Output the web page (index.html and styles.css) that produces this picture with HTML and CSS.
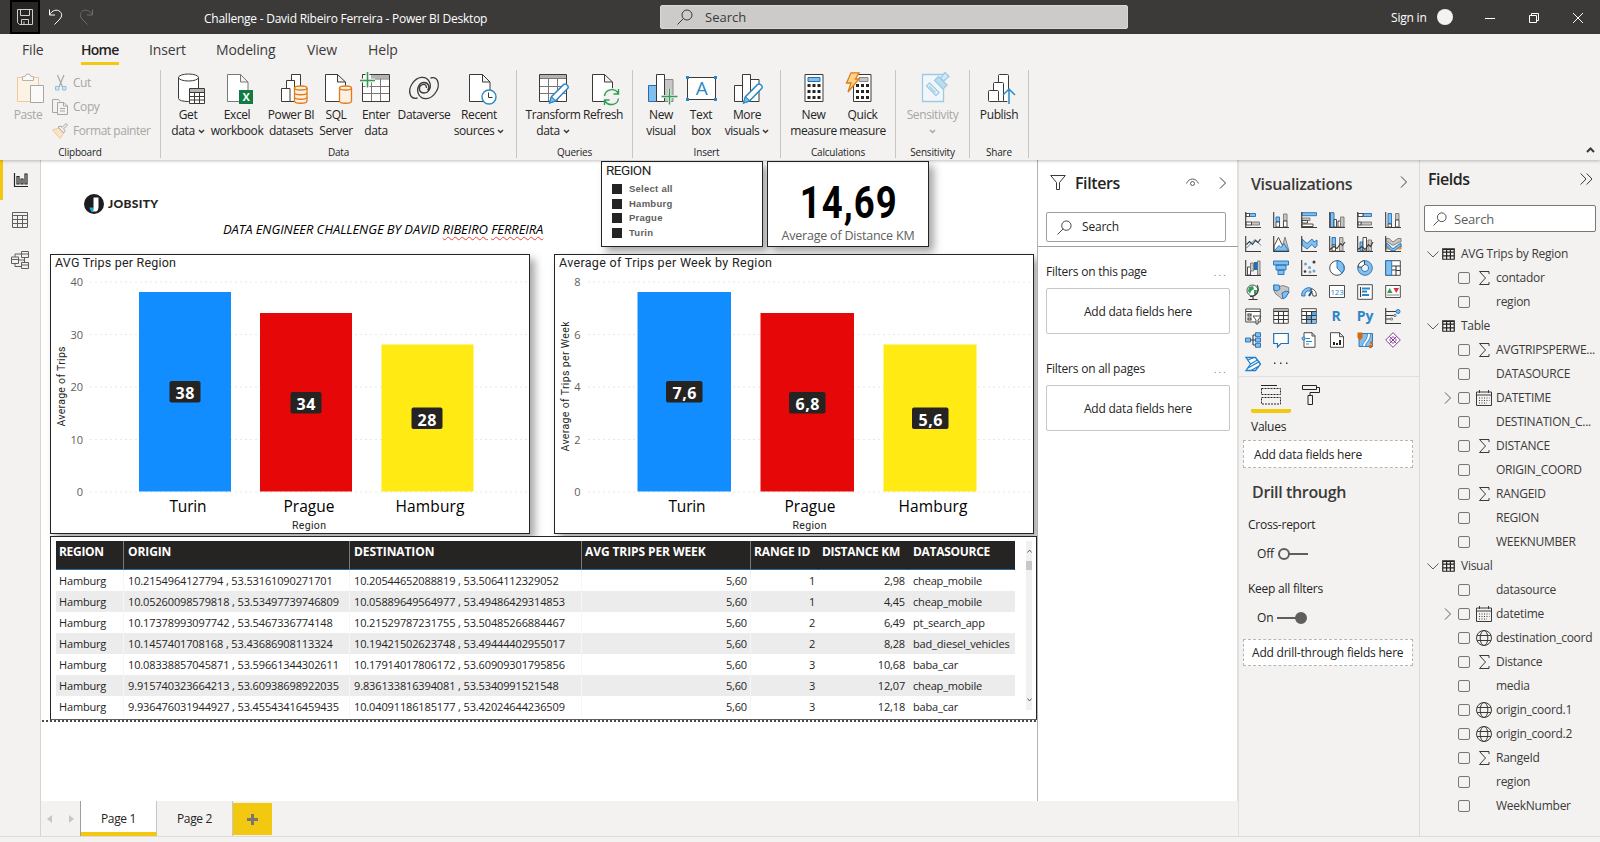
FILE: index.html
```html
<!DOCTYPE html>
<html lang="en">
<head>
<meta charset="utf-8">
<title>Challenge - David Ribeiro Ferreira - Power BI Desktop</title>
<link rel="stylesheet" href="styles.css">
</head>
<body>
<svg class="defs" width="0" height="0">
  <symbol id="i-search" viewBox="0 0 16 16"><circle cx="10" cy="6" r="5"/><path d="M6.400 9.600L.5 15.500"/></symbol>
  <symbol id="i-chev" viewBox="0 0 8 12"><path d="M1 .5L6.500 6 1 11.500"/></symbol>
  <symbol id="i-down" viewBox="0 0 12 7"><path d="M.5 .5L6 6 11.500 .5"/></symbol>
  <symbol id="i-caret" viewBox="0 0 7 5"><path d="M1 1L3.500 3.500 6 1"/></symbol>
  <symbol id="i-table" viewBox="0 0 13 12"><path d="M.75 .75h11.500v10.500H.75zM.75 1.300h11.500M.75 4.200h11.500M.75 7.800h11.500M4.600 1v10.500M8.400 1v10.500"/></symbol>
  <symbol id="i-sigma" viewBox="0 0 16 16"><path d="M13 4V1.500H3.500L9.500 8l-6 6.500H13V12"/></symbol>
  <symbol id="i-globe" viewBox="0 0 16 16"><circle cx="8" cy="8" r="7.500"/><ellipse cx="8" cy="8" rx="3.800" ry="7.500"/><path d="M1.200 5.500h13.600M1.200 10.500h13.600"/></symbol>
  <symbol id="i-cal" viewBox="0 0 16 16"><path d="M.5 2h15v13.500H.5zM.5 5h15M3.500 0v3M12.500 0v3"/><path stroke-dasharray="1 1.500" d="M3 8h10.500M3 10.500h10.500M3 13h8"/></symbol>
  <symbol id="i-pencil" viewBox="0 0 20 20"><path fill="#fff" stroke="#2b88c8" stroke-width="1.400" d="M1 19l1.800-6L14.500 1.300q1.500-1 3.200.6t.7 3.200L6.800 17z"/><path fill="#83beec" stroke="#2b88c8" d="M1 19l1.800-6 4 4z"/></symbol>
</svg>

<header class="titlebar">
  <div class="quick">
    <span class="save"><svg width="16" height="16" viewBox="0 0 16 16"><path d="M.5 .5h15v15H2.500l-2-2zM3.500 .5v6h9v-6M4.500 15.500v-5h7v5M7 15.500v-3"/></svg></span>
    <svg width="16" height="16" viewBox="0 0 16 16"><path d="M1.500 .5v5.500h5.500M1.500 6C4 1 9 0 12 2.500c3 3 1.500 6-1 8.500L6.500 15.500"/></svg>
    <svg class="off" width="16" height="16" viewBox="0 0 16 16"><path d="M14.500 .5v5.500H9M14.500 6C12 1 7 0 4 2.500 1 5.500 2.500 8.500 5 11l4.500 4.500"/></svg>
  </div>
  <div class="doc-title">Challenge - David Ribeiro Ferreira - Power BI Desktop</div>
  <div class="top-search"><svg width="16" height="16"><use href="#i-search"/></svg><span>Search</span></div>
  <div class="account"><span>Sign in</span><i></i></div>
  <div class="win">
    <svg width="10" height="10" viewBox="0 0 10 10"><path d="M0 5.500h10"/></svg>
    <svg width="10" height="10" viewBox="0 0 10 10"><path d="M.5 2.500h7v7h-7zM2.500 2.500v-2h7v7h-2"/></svg>
    <svg width="10" height="10" viewBox="0 0 10 10"><path d="M0 0l10 10M10 0L0 10"/></svg>
  </div>
</header>

<section class="ribbon">
  <nav class="menu">
    <span class="m-file">File</span><span class="m-home">Home</span><span class="m-insert">Insert</span><span class="m-model">Modeling</span><span class="m-view">View</span><span>Help</span>
  </nav>
  <div class="groups">
    <div class="group g-clip">
      <div class="tools">
        <div class="btn off paste"><svg width="32" height="32" viewBox="0 0 32 32"><path fill="#fdf3e4" stroke="#efc997" d="M5.500 5.500h21v24h-21z"/><path fill="#fafafa" stroke="#b5b3b1" d="M10.500 8.500v-4H13Q13.500 2 16 2t3 2.500h2.500v4z"/><path fill="#fafafa" stroke="#a8a6a4" d="M18.500 13.500h13v17h-13z"/></svg><span>Paste</span></div>
        <div class="clip-list">
          <div><svg width="16" height="16" viewBox="0 0 16 16"><path stroke="#a8a6a4" stroke-width="1.200" d="M5.500 0L10.500 12M12 0L7 12"/><path stroke="#8fc0e0" fill="#cfe6f5" d="M3.500 11.500h3.500v3.500h-3.500zM10.500 11.500H14v3.500h-3.500z"/></svg><span>Cut</span></div>
          <div><svg width="16" height="16" viewBox="0 0 16 16"><path stroke="#a8a6a4" d="M5 13.500H.5V.5h6l1.500 2M5.500 3.500H12l3.500 3.500v8.500h-10zM11.500 3.500V7h4M8 9.500h5M8 12h5"/></svg><span>Copy</span></div>
          <div><svg width="16" height="16" viewBox="0 0 16 16"><path stroke="#efc997" fill="#fbe3c8" d="M.5 7L7 5l5 4.500-4 6z"/><path stroke="#a8a6a4" fill="#f3f2f1" d="M6 4l3-1 1 1.500L14 .5l1.500 1.500-4 4L13 7.500 11.500 10z"/></svg><span>Format painter</span></div>
        </div>
      </div>
      <div class="glabel">Clipboard</div>
    </div>

    <div class="group g-data">
      <div class="tools">
        <div class="btn w50"><svg width="32" height="32" viewBox="0 0 32 32"><path class="pg" d="M6.500 5.500v21c0 4 20 4 20 0v-21"/><ellipse class="pg" cx="16.500" cy="5.500" rx="10" ry="3.500"/><path class="pg" d="M17.500 16.500h15v15h-15z"/><path fill="#b5b3b1" stroke="none" d="M18 17h14v3H18z"/><path class="ln" d="M17.500 20.500h15M17.500 24.500h15M17.500 28h15M22.500 20v11M27.500 20v11"/></svg><span>Get<br>data<svg class="car" width="7" height="5"><use href="#i-caret"/></svg></span></div>
        <div class="btn w48"><svg width="32" height="32" viewBox="0 0 32 32"><path class="pg lt" d="M6.500 2.500h13l7.500 7.500v19.500H6.500zM19.500 2.500V10H27"/><path fill="#107c41" stroke="none" d="M18 18h14v14H18z"/><text x="25" y="29" class="xl">X</text></svg><span>Excel<br>workbook</span></div>
        <div class="btn w60"><svg width="32" height="32" viewBox="0 0 32 32"><path class="pg" d="M16.500 2.500h9v27h-9z"/><path class="pg" d="M11.500 8.500h8v21h-8z"/><path class="pg" d="M6.500 16.500h8.500v13H6.500z"/><path class="or" d="M19.500 16v13c0 3 12.500 3 12.500 0V16"/><path class="or" d="M19.500 20.500c0 3 12.500 3 12.500 0M19.500 25c0 3 12.500 3 12.500 0"/><ellipse class="or" cx="25.750" cy="16" rx="6.250" ry="2"/></svg><span>Power BI<br>datasets</span></div>
        <div class="btn w30"><svg width="32" height="32" viewBox="0 0 32 32"><path class="pg" d="M5.500 2.500h12l8 7.500v19.500h-20zM17.500 2.500V10h8"/><path class="or" d="M19.500 16v13c0 3 12 3 12 0V16"/><ellipse class="or" cx="25.500" cy="16" rx="6" ry="2"/></svg><span>SQL<br>Server</span></div>
        <div class="btn w50"><svg width="32" height="32" viewBox="0 0 32 32"><path class="pg" d="M2.500 2.500h27v27h-27z"/><path fill="#b5b3b1" stroke="none" d="M11 3h18v3.500H11z"/><path class="ln lt" d="M3 14.500h26M3 21.500h26M11.500 7v22M20.500 7v22M11 7h18"/><path stroke="#f3f2f1" stroke-width="4" d="M0 8.500h15M7.500 0v15"/><path stroke="#2f9e55" stroke-width="1.500" d="M0 8.500h15M7.500 0v15.500"/></svg><span>Enter<br>data</span></div>
        <div class="btn w46"><svg width="32" height="32" viewBox="0 0 32 32"><path class="ln" stroke-width="1.300" d="M9.500 26C1 28 0 18 4 12 9 4 18 3 21.500 10c2.500 6-1 11-5.500 11-5 0-6-6-2.500-8 3-1.500 5 0 5 3M22.500 6C31 4 32 14 28 20c-5 8-14 9-17.500 2-2.500-6 1-11.500 5.500-11.500 5 0 6 5.500 3.500 7.500"/></svg><span>Dataverse</span></div>
        <div class="btn w64"><svg width="32" height="32" viewBox="0 0 32 32"><path class="pg" d="M6.500 2.500h13l7.500 7.500v19.500H6.500zM19.500 2.500V10H27"/><circle cx="26" cy="25" r="7" fill="#fff" stroke="#2b88c8" stroke-width="1.400"/><path class="ln" d="M25.500 20.500v5h4"/></svg><span>Recent<br>sources<svg class="car" width="7" height="5"><use href="#i-caret"/></svg></span></div>
      </div>
      <div class="glabel">Data</div>
    </div>

    <div class="group g-query">
      <div class="tools">
        <div class="btn w60"><svg width="32" height="32" viewBox="0 0 32 32"><path class="pg" d="M2.500 2.500h27v27h-27z"/><path fill="#b5b3b1" stroke="none" d="M3 3h26v3H3z"/><path class="ln lt" d="M3 6.500h26M3 14.500h26M3 21.500h26M11.500 7v22M20.500 7v22"/><use href="#i-pencil" x="11.500" y="11" width="21" height="21"/></svg><span>Transform<br>data<svg class="car" width="7" height="5"><use href="#i-caret"/></svg></span></div>
        <div class="btn w40"><svg width="32" height="32" viewBox="0 0 32 32"><path class="pg" d="M5.500 2.500h12l8 7.500v19.500h-20zM17.500 2.500V10h8"/><circle cx="24.500" cy="25" r="9" fill="#f3f2f1" stroke="none"/><path stroke="#2f9e55" stroke-width="1.400" d="M17.500 24c1-7 10-8.500 13.500-3M31.500 17v5h-5M31.500 26.500c-1 7-10 8-13.500 2.500M17.500 33v-5h5"/></svg><span>Refresh</span></div>
      </div>
      <div class="glabel">Queries</div>
    </div>

    <div class="group g-insert">
      <div class="tools">
        <div class="btn w42"><svg width="32" height="32" viewBox="0 0 32 32"><path fill="#83beec" stroke="#1e6fb5" d="M3.500 13.500h8v16h-8z"/><path fill="#c8c6c4" stroke="#8a8886" d="M19.500 7.500h8.500v22h-8.500z"/><path class="pg" d="M11.500 2.500h8v27h-8z"/><path stroke="#f3f2f1" stroke-width="3" d="M16.500 24.500h16M24.500 16.500v16"/><path stroke="#2f9e55" stroke-width="1.400" d="M16.500 24.500h16M24.500 16.500v16"/></svg><span>New<br>visual</span></div>
        <div class="btn w38"><svg width="32" height="32" viewBox="0 0 32 32"><path class="pg" d="M2.500 5.500h28v22h-28z"/><path fill="#2b88c8" stroke="none" d="M1 4h3v3H1zM29 4h3v3h-3zM1 26h3v3H1zM29 26h3v3h-3z"/><text x="16.500" y="23" class="bigA">A</text></svg><span>Text<br>box</span></div>
        <div class="btn w54"><svg width="32" height="32" viewBox="0 0 32 32"><path class="pg" d="M3.500 13.500h8v16h-8zM19.500 7.500h8.500v22h-8.500z"/><path class="pg" d="M11.500 2.500h8v27h-8z"/><use href="#i-pencil" x="11.500" y="11" width="21" height="21"/></svg><span>More<br>visuals<svg class="car" width="7" height="5"><use href="#i-caret"/></svg></span></div>
      </div>
      <div class="glabel">Insert</div>
    </div>

    <div class="group g-calc">
      <div class="tools">
        <div class="btn w49"><svg width="32" height="32" viewBox="0 0 32 32"><path class="pg" d="M7 2.500h18v27H7z"/><path fill="#83beec" stroke="#1e6fb5" d="M10 5.500h12v4H10z"/><path stroke="#252423" stroke-width="3" stroke-dasharray="3 2" d="M9.500 13.500h13M9.500 19.500h13M9.500 25.500h13"/></svg><span>New<br>measure</span></div>
        <div class="btn w49"><svg width="32" height="32" viewBox="0 0 32 32"><path class="pg" d="M6.500 2.500h17.500v27H6.500z"/><path fill="#c8c6c4" stroke="#8a8886" d="M12 5.500h9v4h-9z"/><path stroke="#252423" stroke-width="3" stroke-dasharray="3 2" d="M9 13.500h13M9 19.500h13M9 25.500h13"/><path fill="#fcd48a" stroke="#e07b1a" stroke-width="1.300" d="M4 .8h8L8.500 7H12L1 20l3-9H-.5z"/></svg><span>Quick<br>measure</span></div>
      </div>
      <div class="glabel">Calculations</div>
    </div>

    <div class="group g-sens">
      <div class="tools">
        <div class="btn off"><svg width="32" height="32" viewBox="0 0 32 32"><g stroke="#9ccbe6" stroke-width="1.300" fill="#f3f6f8"><path d="M5.500 2.500h21v27h-21z"/><path d="M9.500 14l3-3 9.500 9.500-3 3zM12 14l6.500 6.500"/><path fill="#bcdcee" d="M17.500 8.500l4-4 8.500 8.500-4 4z"/><path fill="#d5e8f3" d="M23.500 6l4.500-5.500 4 4L26.500 9z"/></g></svg><span>Sensitivity<br><svg class="car" width="7" height="5"><use href="#i-caret"/></svg></span></div>
      </div>
      <div class="glabel">Sensitivity</div>
    </div>

    <div class="group g-share">
      <div class="tools">
        <div class="btn"><svg width="32" height="32" viewBox="0 0 32 32"><g class="pg"><rect x="15.500" y="2.500" width="10" height="27" rx="1"/><rect x="10.500" y="10.500" width="10" height="19" rx="1"/><rect x="5.500" y="18.500" width="10" height="11" rx="1"/></g><path stroke="#f3f2f1" stroke-width="3" d="M26 17v15"/><path stroke="#2b88c8" stroke-width="1.500" d="M26 17v15M20 23l6-6 6 6"/></svg><span>Publish</span></div>
      </div>
      <div class="glabel">Share</div>
    </div>
    <svg class="collapse" width="9" height="6" viewBox="0 0 9 6"><path d="M1 5l3.500-3.500L8 5"/></svg>
  </div>
</section>

<main class="work">
  <aside class="rail">
    <div class="on"><svg width="16" height="16" viewBox="0 0 16 16"><path d="M1.500 1v13.500H15M4 4.500h2V12H4zM8 7h2v5H8zM12 2h2v10h-2z"/></svg></div>
    <div><svg width="16" height="16" viewBox="0 0 16 16"><path d="M.5 .5h15v15H.5zM.5 3.500h15M.5 7.500h15M.5 11.500h15M5.500 3.500v12M10.500 3.500v12"/></svg></div>
    <div><svg width="18" height="18" viewBox="0 0 18 18"><path d="M10.500 .5h7v6h-7zM10.500 3h7M10.500 11.500h7v6h-7zM10.500 14h7M.5 6h7v6.500h-7zM.5 8.500h7M4 6V3h6.500M4 12.500v3h6.500M7.500 9h6V6.500M13.500 9v2.500"/></svg></div>
  </aside>

  <div class="center">
    <div class="stage">
      <div class="canvas">
        <div class="logo">
          <svg width="20" height="20" viewBox="0 0 20 20"><circle cx="10" cy="10" r="10" fill="#1d1d1f" stroke="none"/><path fill="#fff" stroke="none" d="M9.500 3.500h5v10q0 2.500-2 4H7q2.500-1 2.500-4z"/><path fill="#17a8e0" stroke="none" d="M5.500 13.500h4v4Q6.500 17.500 5.500 14z"/></svg>
          <b>JOBSITY</b>
        </div>
        <div class="headline">DATA ENGINEER CHALLENGE BY DAVID <u>RIBEIRO</u> <u>FERREIRA</u></div>

        <div class="visual slicer">
          <h3>REGION</h3>
          <ul><li>Select all</li><li>Hamburg</li><li>Prague</li><li>Turin</li></ul>
        </div>
        <div class="visual card"><strong>14,69</strong><span>Average of Distance KM</span></div>

        <div class="visual chart c1">
          <svg width="478" height="278" viewBox="51.500 255.500 478 278">
            <g class="grid"><path d="M91 282.500h436M91 335h436M91 387.500h436M91 440h436M91 492.500h436"/></g>
            <text class="ct" x="55.500" y="267" textLength="121">AVG Trips per Region</text>
            <g class="ax"><text x="83.500" y="286">40</text><text x="83.500" y="339">30</text><text x="83.500" y="391">20</text><text x="83.500" y="444">10</text><text x="83.500" y="496">0</text></g>
            <rect x="139.500" y="292.500" width="92" height="199.500" fill="#118dff"/>
            <rect x="260.500" y="313.500" width="92" height="178.500" fill="#e60808"/>
            <rect x="382" y="345" width="92" height="147" fill="#ffea13"/>
            <g class="tag"><rect x="170" y="381.500" width="31" height="21.500" rx="2"/><rect x="291" y="392.500" width="31" height="21.500" rx="2"/><rect x="412" y="408" width="31" height="21.500" rx="2"/></g>
            <g class="val"><text x="185.500" y="399.500" textLength="19">38</text><text x="306.500" y="410" textLength="19">34</text><text x="427.500" y="426" textLength="19">28</text></g>
            <g class="cat"><text x="188.500" y="512" textLength="37">Turin</text><text x="309.500" y="512" textLength="51">Prague</text><text x="430.500" y="512" textLength="69">Hamburg</text></g>
            <text class="at" x="309.500" y="529" textLength="34">Region</text>
            <text class="at" transform="translate(65.500 387) rotate(-90)" textLength="80">Average of Trips</text>
          </svg>
        </div>

        <div class="visual chart c2">
          <svg width="478" height="278" viewBox="555.500 255.500 478 278">
            <g class="grid"><path d="M589 282.500h441M589 335h441M589 387.500h441M589 440h441M589 492.500h441"/></g>
            <text class="ct" x="559.500" y="267" textLength="213">Average of Trips per Week by Region</text>
            <g class="ax"><text x="581" y="286">8</text><text x="581" y="339">6</text><text x="581" y="391">4</text><text x="581" y="444">2</text><text x="581" y="496">0</text></g>
            <rect x="638" y="292.500" width="93.500" height="199.500" fill="#118dff"/>
            <rect x="761" y="313.500" width="93.500" height="178.500" fill="#e60808"/>
            <rect x="884" y="345" width="93" height="147" fill="#ffea13"/>
            <g class="tag"><rect x="666.500" y="381.500" width="36.500" height="21.500" rx="2"/><rect x="789.500" y="392.500" width="36.500" height="21.500" rx="2"/><rect x="912.500" y="408" width="36.500" height="21.500" rx="2"/></g>
            <g class="val"><text x="685" y="399.500" textLength="24">7,6</text><text x="808" y="410" textLength="24">6,8</text><text x="931" y="426" textLength="24">5,6</text></g>
            <g class="cat"><text x="687.500" y="512" textLength="37">Turin</text><text x="810.500" y="512" textLength="51">Prague</text><text x="933.500" y="512" textLength="69">Hamburg</text></g>
            <text class="at" x="810" y="529" textLength="34">Region</text>
            <text class="at" transform="translate(569.500 387) rotate(-90)" textLength="130">Average of Trips per Week</text>
          </svg>
        </div>

        <div class="visual grid-visual">
          <table>
            <colgroup><col class="k1"><col class="k2"><col class="k3"><col class="k4"><col class="k5"><col class="k6"><col class="k7"></colgroup>
            <thead><tr><th>REGION</th><th>ORIGIN</th><th>DESTINATION</th><th>AVG TRIPS PER WEEK</th><th>RANGE ID</th><th>DISTANCE KM</th><th>DATASOURCE</th></tr></thead>
            <tbody>
              <tr><td>Hamburg</td><td>10.2154964127794 , 53.53161090271701</td><td>10.20544652088819 , 53.5064112329052</td><td>5,60</td><td>1</td><td>2,98</td><td>cheap_mobile</td></tr>
              <tr><td>Hamburg</td><td>10.05260098579818 , 53.53497739746809</td><td>10.05889649564977 , 53.49486429314853</td><td>5,60</td><td>1</td><td>4,45</td><td>cheap_mobile</td></tr>
              <tr><td>Hamburg</td><td>10.17378993097742 , 53.5467336774148</td><td>10.21529787231755 , 53.50485266884467</td><td>5,60</td><td>2</td><td>6,49</td><td>pt_search_app</td></tr>
              <tr><td>Hamburg</td><td>10.1457401708168 , 53.43686908113324</td><td>10.19421502623748 , 53.49444402955017</td><td>5,60</td><td>2</td><td>8,28</td><td>bad_diesel_vehicles</td></tr>
              <tr><td>Hamburg</td><td>10.08338857045871 , 53.59661344302611</td><td>10.17914017806172 , 53.60909301795856</td><td>5,60</td><td>3</td><td>10,68</td><td>baba_car</td></tr>
              <tr><td>Hamburg</td><td>9.915740323664213 , 53.60938698922035</td><td>9.836133816394081 , 53.5340991521548</td><td>5,60</td><td>3</td><td>12,07</td><td>cheap_mobile</td></tr>
              <tr><td>Hamburg</td><td>9.936476031944927 , 53.45543416459435</td><td>10.04091186185177 , 53.42024644236509</td><td>5,60</td><td>3</td><td>12,18</td><td>baba_car</td></tr>
            </tbody>
          </table>
          <div class="scroll"><svg width="5" height="4" viewBox="0 0 5 4"><path d="M.5 3.500l2-2.500 2 2.500"/></svg><i></i><svg width="5" height="4" viewBox="0 0 5 4"><path d="M.5 .5l2 2.500 2-2.500"/></svg></div>
        </div>
        <div class="page-edge"></div>
      </div>

      <aside class="filters">
        <div class="f-head">
          <svg width="16" height="15" viewBox="0 0 16 15"><path d="M.7 .5h14.600L9.500 7.500v7h-3v-7z"/></svg>
          <h2>Filters</h2>
          <svg class="eye" width="13" height="9" viewBox="0 0 13 9"><path d="M.5 5.500C3-.5 10-.5 12.500 5.500"/><circle cx="6.500" cy="5.500" r="2"/></svg>
          <svg width="8" height="12"><use href="#i-chev"/></svg>
        </div>
        <div class="f-search"><svg width="15" height="15"><use href="#i-search"/></svg><span>Search</span></div>
        <div class="f-sec"><span>Filters on this page</span><em>...</em></div>
        <div class="f-drop">Add data fields here</div>
        <div class="f-sec two"><span>Filters on all pages</span><em>...</em></div>
        <div class="f-drop">Add data fields here</div>
      </aside>
    </div>

    <div class="pages">
      <div class="arrows"><svg width="5" height="8" viewBox="0 0 5 8"><path d="M5 0v8L0 4z"/></svg><svg width="5" height="8" viewBox="0 0 5 8"><path d="M0 0v8l5-4z"/></svg></div>
      <div class="page on">Page 1</div>
      <div class="page">Page 2</div>
      <div class="add"><svg width="11" height="11" viewBox="0 0 11 11"><path d="M0 5.500h11M5.500 0v11"/></svg></div>
    </div>
  </div>

  <aside class="viz">
    <div class="v-head"><h2>Visualizations</h2><svg width="8" height="12"><use href="#i-chev"/></svg></div>
    <div class="v-grid">
      <svg viewBox="0 0 16 16"><path class="b" d="M4.500 1.500h6v3h-6z"/><path class="g" d="M6.500 10h8v3h-8z"/><path class="w" d="M1 1.500h3.500v3H1zM1 10h5.500v3H1z"/><path class="d" d="M.7 0v15.500H16"/></svg>
      <svg viewBox="0 0 16 16"><path class="b" d="M3 5h3.500v5H3z"/><path class="g" d="M10.500 2H14v7h-3.500z"/><path class="w" d="M3 10h3.500v5H3zM10.500 9H14v6h-3.500z"/><path class="d" d="M.7 0v15.500H16"/></svg>
      <svg viewBox="0 0 16 16"><path class="b" d="M1 .7h14.500v3H1z"/><path class="g" d="M1 6h8v2.500H1z"/><path class="w" d="M1 8.500h5.500v2.500H1zM1 12h11v2.500H1z"/><path class="d" d="M.7 0v15.500H16"/></svg>
      <svg viewBox="0 0 16 16"><path class="b" d="M1.500 .7H5v14.500H1.500z"/><path class="w" d="M5 7.500h2.500v7.500H5zM9 9h2.500v6H9z"/><path class="g" d="M11.500 5H15v10h-3.500z"/><path class="d" d="M.7 0v15.500H16"/></svg>
      <svg viewBox="0 0 16 16"><path class="b" d="M6 1.500h8.500v3H6z"/><path class="g" d="M4 10h10.500v3H4z"/><path class="w" d="M1 1.500h5v3H1zM1 10h3v3H1z"/><path class="d" d="M.7 0v15.500H16"/></svg>
      <svg viewBox="0 0 16 16"><path class="b" d="M3 1.500h3.500V12H3z"/><path class="g" d="M10.500 1.500H14V8h-3.500z"/><path class="w" d="M3 12h3.500v3H3zM10.500 8H14v7h-3.500z"/><path class="d" d="M.7 0v15.500H16"/></svg>

      <svg viewBox="0 0 16 16"><path class="bl" d="M1.500 12L10 3.500l6 6"/><path class="d" d="M1.500 8.500l3-3 3 3 3-4 2.500 2L15.500 3M.7 0v15.500H16"/></svg>
      <svg viewBox="0 0 16 16"><path class="g" d="M12 1l4 14H8z"/><path class="w" d="M1 10L5.500 1.500 12 15H1z"/><path class="b" d="M1 15l5-5.500 2 2 3-4 4.500 7.500z"/><path class="d" d="M.7 0v15.500H16"/></svg>
      <svg viewBox="0 0 16 16"><path class="b" d="M1 3l5 4.500L11 3l2 3 3-2v5.500L14 12l-3-3.500-5 4.500-5-4z"/><path class="d" d="M.7 0v15.500H16"/></svg>
      <svg viewBox="0 0 16 16"><path class="b" d="M3 1.500h3.500V9H3z"/><path class="w" d="M3 9h3.500v6H3z"/><path class="g" d="M10.500 1.500H14V15h-3.500z"/><path class="d" d="M1 13.500l4-3 3 2 3.500-5 2 2L16 6M.7 0v15.500H16"/></svg>
      <svg viewBox="0 0 16 16"><path class="b" d="M3 6h3v9H3z"/><path class="w" d="M6 1.500h3.500V15H6z"/><path class="g" d="M11 4h3.500v11H11z"/><path class="d" d="M1 13.500l4-3 3 3 3.500-5 2 2L16 6M.7 0v15.500H16"/></svg>
      <svg viewBox="0 0 16 16"><path class="g" d="M1 2.500h3l4 3.500 5-3.500h3V6h-2l-5 3H7L3 6H1z"/><path fill="#f3b562" stroke="#e07b1a" d="M1 8h2l3 3-2 2H1zM16 9h-2l-4 2 3 2h3z"/><path class="b" d="M1 7.500c4 0 4 5 7 5s4-5 8-5v3c-4 0-4 4.500-8 4.500s-4-4.500-7-4.500z"/><path class="d" d="M.7 0v15.500H16"/></svg>

      <svg viewBox="0 0 16 16"><path class="w" d="M2.500 7h3v8h-3z"/><path class="g" d="M5.500 3h3v8h-3zM12.500 1h2.500v14h-2.500z"/><path fill="#1e6fb5" stroke="none" d="M9 2h3.500v8H9z"/><path class="d" d="M.7 0v15.500H16"/></svg>
      <svg viewBox="0 0 16 16"><path class="b" d="M.5 1h15v4H.5zM3 5h10v5H3zM5 10h6v4.500H5z"/></svg>
      <svg viewBox="0 0 16 16"><g fill="#5fa9e0" stroke="none"><circle cx="4.500" cy="4" r="1.500"/><circle cx="8.500" cy="7.500" r="1.500"/><circle cx="13" cy="11" r="1.500"/></g><g fill="#3b3a39" stroke="none"><circle cx="13" cy="2" r="1.500"/><circle cx="4" cy="11.500" r="1.300"/></g><circle cx="9" cy="12" r="1.500" fill="#a19f9d" stroke="none"/><path class="d" d="M.7 0v15.500H16"/></svg>
      <svg viewBox="0 0 16 16"><circle class="w" cx="8" cy="8" r="7.300"/><path class="b" d="M8 .7A7.300 7.300 0 0 1 13 13.200L8 8z"/></svg>
      <svg viewBox="0 0 16 16"><path class="b" fill-rule="evenodd" d="M8 .7a7.300 7.300 0 1 0 .01 0zM8 4.500a3.500 3.500 0 1 1-.01 0z"/><path class="w" d="M1 7a7 7 0 0 1 6.500-6.300V4.500L4.500 7z"/></svg>
      <svg viewBox="0 0 16 16"><path class="w" d="M.7 .7h14.600v14.600H.7z"/><path class="b" d="M.7 .7h6v14.600h-6z"/><path class="d" d="M7 6h8.500M11 6v9.500M11 10.500h4.500M7 10h4"/></svg>

      <svg viewBox="0 0 16 16"><circle class="w" cx="7.500" cy="6.500" r="5.500"/><path fill="#2f9e55" stroke="none" d="M4 3l4-1 1 3-3 2-1 3-2-3zM9 6l3 0-1 4-2 1z"/><path class="d" d="M12 1c3 5 0 11-7 11.500M8 12.500v3M3.500 15.500h9"/></svg>
      <svg viewBox="0 0 16 16"><path class="g" d="M.7 1l6 1.500 3-1 3.500 1 2.500 1v5l-3 4-4 2.500-3-3-3-2-2-4z"/><path class="b" d="M.7 1H6l1 4-3 2-3-1zM9 9l4-2 3 1-3 5-3 2z"/></svg>
      <svg viewBox="0 0 16 16"><path class="b" d="M.7 12A7.300 7.300 0 0 1 10 4l-1 3a4 4 0 0 0-5 5z"/><path class="w" d="M10.500 4.500A7.300 7.300 0 0 1 15.300 12H12q0-3-2-4.500z"/><path stroke="#1b4f7c" stroke-width="2" d="M8 12l3-5"/></svg>
      <svg viewBox="0 0 16 16"><path class="w" d="M.5 1.500h15v12H.5z"/><text x="8" y="10.800" class="n123">123</text></svg>
      <svg viewBox="0 0 16 16"><path class="w" d="M.7 .7h14.600v14.600H.7z"/><path class="d" d="M3.500 3v10"/><path class="bl" stroke-width="1.800" d="M5 4.500h8M5 7.500h5M5 11h7"/></svg>
      <svg viewBox="0 0 16 16"><path class="w" d="M.7 1.500h14.600v12H.7z"/><path fill="#2f9e55" stroke="none" d="M2 9l2.700-5L7.500 9z"/><path fill="#d13438" stroke="none" d="M8.500 4H14l-2.700 5z"/><path class="g" d="M2 11h12"/></svg>

      <svg viewBox="0 0 16 16"><path class="w" d="M.7 1h14.600v13H.7z"/><path class="d" d="M.7 3.500h14.600M3 6h3v2H3zM3 10h3v2H3z"/><path class="w" stroke-width="1.300" d="M8 8h8l-3 4v4h-2v-4z"/></svg>
      <svg viewBox="0 0 16 16"><path class="w" d="M.7 .7h14.600v14.600H.7z"/><path fill="#b5b3b1" stroke="none" d="M1 1h14v2H1z"/><path class="d" d="M.7 3.500h14.600M.7 7.500h14.600M.7 11.500h14.600M5.500 3.500v12M10.500 3.500v12"/></svg>
      <svg viewBox="0 0 16 16"><path class="w" d="M.7 .7h14.600v14.600H.7z"/><path fill="#83beec" stroke="none" d="M10.500 3.500H15V15H5.500v-3.500h5z"/><path fill="#5aa7e2" stroke="none" d="M10.500 3.500H15v4h-4.500zM5.500 7.500h5v4h-5z"/><path class="d" d="M.7 3.500h14.600M.7 7.500h14.600M.7 11.500h14.600M5.500 3.500v12M10.500 3.500v12"/></svg>
      <svg viewBox="0 0 16 16"><text x="7" y="13" class="code">R</text></svg>
      <svg viewBox="0 0 16 16"><text x="8" y="13" class="code">Py</text></svg>
      <svg viewBox="0 0 16 16"><path class="d" d="M.7 0v15.500H16M1 3.500h10M1 7.500h8M1 11h4"/><circle cx="13" cy="3.500" r="2" class="b"/><path stroke="#8a8886" fill="#ddd" d="M9 6.500h2v2H9zM5.500 10h2v2h-2z"/></svg>

      <svg viewBox="0 0 16 16"><path class="b" d="M.5 6h5v4h-5zM10.500 .7h5v4h-5zM10.500 6h5v4h-5zM10.500 11.300h5v4h-5z"/><path class="d" d="M5.500 8h5M8 3v10M8 3h2.500M8 13h2.500"/></svg>
      <svg viewBox="0 0 16 16"><path fill="#fff" stroke="#1e6fb5" stroke-width="1.200" d="M.7 1.500h14.600v10H8L4.500 15v-3.500H.7z"/></svg>
      <svg viewBox="0 0 16 16"><path class="w" d="M3 .7h8l3 3v11.600H3zM11 .7V4h3"/><circle cx="2.500" cy="6.500" r="1.500" class="b"/><path class="bl" d="M4.500 6.500H9M5 9.500h6M5 12h3"/></svg>
      <svg viewBox="0 0 16 16"><path class="w" d="M1.500 .7h9l4 4v10.600h-13zM10.500 .7v4h4"/><path stroke="#252423" stroke-width="2" d="M5 13V10M8 13v-2M11 13V8"/></svg>
      <svg viewBox="0 0 16 16"><path class="b" d="M2 1.500h13.500v13H2z"/><path fill="#fff" stroke="#1e6fb5" stroke-width=".7" d="M5.500 14.500c0-5 5-5 5-13h3c0 8-5 8-5 13z"/><path fill="#d8690a" stroke="none" d="M.5 .5h5v5L3 8.500.5 5.500z"/><circle cx="14.500" cy="10.500" r="1.500" fill="#d8690a" stroke="none"/><circle cx="13.500" cy="14.500" r="1.800" fill="#d8690a" stroke="none"/></svg>
      <svg viewBox="0 0 16 16"><path fill="#fff" stroke="#8a3d99" d="M8 .7L15.300 8 8 15.300.7 8zM4.500 4.500l7 7M11.500 4.500l-7 7M8 4.500L11.500 8 8 11.500 4.500 8z"/></svg>

      <svg viewBox="0 0 16 16"><path fill="#fff" stroke="#1f7fd0" stroke-width="1.300" d="M1 1.500h9.500L15.500 8l-5 6.500H1L5.500 8z"/><path stroke="#1f7fd0" stroke-width="1.100" d="M3 4l6-2.500M5.500 8l7-4M3 12l11.500-6.500M6 14.500l7-4"/></svg>
      <svg viewBox="0 0 16 16"><path fill="#3b3a39" stroke="none" d="M1 6.500h1.500V8H1zM7 6.500h1.500V8H7zM13 6.500h1.500V8H13z"/></svg>
    </div>
    <div class="v-tabs">
      <div class="on"><svg width="20" height="20" viewBox="0 0 20 20"><path d="M0 .5h16"/><path stroke-dasharray="2 1" d="M.5 3.500h19v6H.5zM.5 12.500h19v6.500H.5z"/></svg></div>
      <div><svg width="18" height="20" viewBox="0 0 18 20"><path d="M.5 .5h14v4H.5zM14.500 2.500h3v5H8v3M6 10.500h4.500v9H6z"/></svg></div>
    </div>
    <div class="v-label">Values</div>
    <div class="v-drop">Add data fields here</div>
    <h2 class="drill">Drill through</h2>
    <div class="v-label cross">Cross-report</div>
    <div class="toggle">Off <svg width="31" height="12" viewBox="0 0 31 12"><circle cx="6" cy="6" r="5"/><path d="M11 6h19"/></svg></div>
    <div class="v-label keep">Keep all filters</div>
    <div class="toggle">On <svg width="31" height="12" viewBox="0 0 31 12"><path d="M0 6h19"/><circle class="full" cx="24" cy="6" r="5"/></svg></div>
    <div class="v-drop second">Add drill-through fields here</div>
  </aside>

  <aside class="fields">
    <div class="d-head"><h2>Fields</h2><svg width="13" height="12" viewBox="0 0 13 12"><path d="M.7 .5L6 6 .7 11.500M6.700 .5L12 6l-5.300 5.500"/></svg></div>
    <div class="d-search"><svg width="14" height="14"><use href="#i-search"/></svg><span>Search</span></div>
    <div class="tree">
      <div class="t"><svg class="dn"><use href="#i-down"/></svg><svg class="tb"><use href="#i-table"/></svg>AVG Trips by Region</div>
      <div class="f"><i></i><b></b><svg><use href="#i-sigma"/></svg>contador</div>
      <div class="f"><i></i><b></b><svg></svg>region</div>
      <div class="t"><svg class="dn"><use href="#i-down"/></svg><svg class="tb"><use href="#i-table"/></svg>Table</div>
      <div class="f"><i></i><b></b><svg><use href="#i-sigma"/></svg>AVGTRIPSPERWE...</div>
      <div class="f"><i></i><b></b><svg></svg>DATASOURCE</div>
      <div class="f"><i><svg><use href="#i-chev"/></svg></i><b></b><svg><use href="#i-cal"/></svg>DATETIME</div>
      <div class="f"><i></i><b></b><svg></svg>DESTINATION_C...</div>
      <div class="f"><i></i><b></b><svg><use href="#i-sigma"/></svg>DISTANCE</div>
      <div class="f"><i></i><b></b><svg></svg>ORIGIN_COORD</div>
      <div class="f"><i></i><b></b><svg><use href="#i-sigma"/></svg>RANGEID</div>
      <div class="f"><i></i><b></b><svg></svg>REGION</div>
      <div class="f"><i></i><b></b><svg></svg>WEEKNUMBER</div>
      <div class="t"><svg class="dn"><use href="#i-down"/></svg><svg class="tb"><use href="#i-table"/></svg>Visual</div>
      <div class="f"><i></i><b></b><svg></svg>datasource</div>
      <div class="f"><i><svg><use href="#i-chev"/></svg></i><b></b><svg><use href="#i-cal"/></svg>datetime</div>
      <div class="f"><i></i><b></b><svg><use href="#i-globe"/></svg>destination_coord</div>
      <div class="f"><i></i><b></b><svg><use href="#i-sigma"/></svg>Distance</div>
      <div class="f"><i></i><b></b><svg></svg>media</div>
      <div class="f"><i></i><b></b><svg><use href="#i-globe"/></svg>origin_coord.1</div>
      <div class="f"><i></i><b></b><svg><use href="#i-globe"/></svg>origin_coord.2</div>
      <div class="f"><i></i><b></b><svg><use href="#i-sigma"/></svg>RangeId</div>
      <div class="f"><i></i><b></b><svg></svg>region</div>
      <div class="f"><i></i><b></b><svg></svg>WeekNumber</div>
    </div>
  </aside>
</main>
<footer class="status"></footer>
</body>
</html>
```
FILE: styles.css
```css
* { box-sizing: border-box; margin: 0; padding: 0; }
body {
  width: 1600px; height: 842px; overflow: hidden;
  display: flex; flex-direction: column;
  font: 12px/16px "Open Sans", "Noto Sans", sans-serif;
  letter-spacing: -0.2px; color: #252423; background: #f3f2f1;
}
svg { display: block; overflow: visible; fill: none; stroke: #3b3a39; flex: none; }
svg text { stroke: none; }
h2 { font-weight: 600; font-size: 16px; line-height: 20px; letter-spacing: -0.4px; }
.defs { position: absolute; }

/* title bar */
.titlebar { flex: none; height: 34px; background: #3b3a39; color: #fff; display: flex; align-items: center; }
.titlebar svg { stroke: #fff; }
.quick { display: flex; align-items: center; width: 204px; height: 34px; padding-left: 10px; gap: 8px; }
.quick svg.off { stroke: #6e6c6a; margin-left: 6px; }
.save { width: 30px; height: 34px; border: 2px solid #000; background: #262524; display: flex; align-items: center; justify-content: center; }
.save svg { stroke: #d0cecc; }
.doc-title { width: 456px; white-space: nowrap; font-size: 12px; letter-spacing: -0.24px; padding-top: 3px; }
.top-search { width: 468px; height: 24px; background: #cccbc9; border: 1px solid #d8d7d5; border-radius: 2px; display: flex; align-items: center; gap: 12px; padding-left: 16px; color: #3b3a39; font-size: 13px; letter-spacing: 0; }
.top-search svg { stroke: #3b3a39; }
.account { display: flex; align-items: center; width: 357px; padding-left: 263px; gap: 10px; white-space: nowrap; font-size: 12px; }
.account span { padding-top: 2px; }
.account i { width: 16px; height: 16px; border-radius: 50%; background: #f3f2f1; flex: none; }
.win { display: flex; gap: 34px; padding-top: 2px; }

/* ribbon */
.ribbon { flex: none; height: 126px; background: #f3f2f1; box-shadow: 0 1px 3px rgba(0,0,0,.25); position: relative; z-index: 2; }
.menu { height: 36px; display: flex; padding-left: 22px; font-size: 14px; letter-spacing: -0.15px; line-height: 32px; color: #3b3a39; }
.menu span { white-space: nowrap; flex: none; }
.m-file { width: 59px; }
.m-home { width: 38px; margin-right: 30px; height: 31px; border-bottom: 3px solid #f2c811; font-weight: 600; color: #252423; letter-spacing: -0.75px; }
.m-insert { width: 67px; }
.m-model { width: 91px; }
.m-view { width: 61px; }
.groups { display: flex; height: 88px; }
.group { height: 88px; border-right: 1px solid #c8c6c4; display: flex; flex-direction: column; flex: none; }
.tools { display: flex; height: 75px; padding-top: 2px; }
.glabel { text-align: center; font-size: 10px; line-height: 16px; letter-spacing: -0.2px; padding-top: 1px; transform: translateY(2px); }
.btn { display: flex; flex-direction: column; align-items: center; flex: none; text-align: center; white-space: nowrap; line-height: 16px; letter-spacing: -0.4px; }
.btn > span { margin-top: 3px; }
.btn.off, .clip-list { color: #a8a6a4; }
.car { display: inline-block; margin-left: 3px; vertical-align: 1px; stroke-width: 1.500; }
.off .car { stroke: #a8a6a4; margin-left: 0; }
.g-clip { width: 161px; }
.paste { width: 56px; }
.clip-list { display: flex; flex-direction: column; gap: 8px; padding-top: 3px; margin-left: -4px; letter-spacing: -0.45px; }
.clip-list div { display: flex; gap: 5px; }
.g-data { width: 356px; } .g-data .tools { padding-left: 2px; }
.g-query { width: 116px; } .g-query .tools { padding-left: 6px; }
.g-insert { width: 148px; } .g-insert .tools { padding-left: 7px; }
.g-calc { width: 115px; } .g-calc .tools { padding-left: 8px; }
.g-sens { width: 74px; }
.g-share { width: 59px; }
.g-sens .tools, .g-share .tools { justify-content: center; }
.w30 { width: 30px; } .w38 { width: 38px; } .w40 { width: 40px; } .w42 { width: 42px; }
.w46 { width: 46px; } .w48 { width: 48px; } .w49 { width: 49px; } .w50 { width: 50px; }
.w54 { width: 54px; } .w60 { width: 60px; } .w64 { width: 64px; }
.pg { fill: #fff; stroke: #3b3a39; }
.ln { fill: none; stroke: #3b3a39; }
.lt { stroke: #797775; }
.or { fill: #fdf0e2; stroke: #e07b1a; stroke-width: 1.300; }
.xl { font: bold 11px "Open Sans", sans-serif; fill: #fff; text-anchor: middle; }
.bigA { font: 19px "Open Sans", sans-serif; fill: #2b88c8; text-anchor: middle; }
.collapse { align-self: flex-end; margin: 0 5px 5px auto; stroke-width: 2; }

/* work area */
.work { flex: none; height: 676px; display: flex; }
.rail { width: 41px; border-right: 1px solid #d6d4d2; }
.rail div { height: 40px; display: flex; align-items: center; justify-content: center; }
.rail svg { stroke: #605e5c; }
.rail .on { border-left: 3px solid #f2c811; padding-right: 2px; }
.rail .on svg { stroke: #252423; stroke-width: 1.200; }
.center { width: 1197px; display: flex; flex-direction: column; }
.stage { height: 641px; display: flex; background: #fff; }
.canvas { width: 997px; position: relative; border-right: 1px solid #b3b0ad; overflow: hidden; }

/* report page: visuals are placed freely */
.logo { position: absolute; left: 43px; top: 34px; display: flex; align-items: center; gap: 4px; }
.logo b { font: 900 12px/20px Lato, sans-serif; letter-spacing: 0.300px; }
.headline { position: absolute; left: 182px; top: 60px; white-space: nowrap; font-size: 13px; line-height: 19px; font-style: italic; letter-spacing: -0.08px; color: #000; }
.headline u { text-decoration: underline wavy #f0403c 1px; text-underline-offset: 2px; text-decoration-skip-ink: none; }
.visual { position: absolute; background: #fff; border: 1px solid #252423; box-shadow: 5px 5px 8px rgba(0,0,0,.35); }
.slicer { left: 560px; top: 1px; width: 162px; height: 86px; padding: 0 4px; }
.slicer h3 { font: 400 13.500px/16px Roboto, sans-serif; letter-spacing: -0.5px; }
.slicer ul { list-style: none; padding: 4px 0 0 6px; }
.slicer li { display: flex; align-items: center; gap: 7px; height: 14.500px; font: bold 9.500px/14px "Liberation Sans", Arial, sans-serif; letter-spacing: 0.250px; color: #605e5c; }
.slicer li::before { content: ""; width: 10px; height: 10px; background: #252423; }
.card { left: 726px; top: 1px; width: 162px; height: 86px; display: flex; flex-direction: column; align-items: center; }
.card strong { font: 700 44px/50px Roboto, sans-serif; color: #000; letter-spacing: 1.200px; transform: scaleX(.83); margin-top: 16px; padding-left: 2px; }
.card span { font-size: 12.500px; color: #605e5c; line-height: 16px; margin-top: 0; letter-spacing: -0.22px; white-space: nowrap; }
.chart { top: 94px; width: 480px; height: 280px; }
.c1 { left: 9px; }
.c2 { left: 513px; }
.chart text { letter-spacing: 0; }
.grid path { stroke: #d2d0ce; stroke-dasharray: 1 4; }
.ct { font: 12.500px Roboto, sans-serif; fill: #252423; }
.ax { font: 11px "Open Sans", sans-serif; fill: #605e5c; text-anchor: end; }
.tag rect { fill: #252423; stroke: none; }
.chart rect { stroke: none; }
.val { font: bold 16px "Open Sans", sans-serif; fill: #fff; text-anchor: middle; }
.cat { font: 15.500px "Open Sans", sans-serif; fill: #000; text-anchor: middle; }
.at { font: 10.500px Roboto, sans-serif; fill: #252423; text-anchor: middle; }
.grid-visual { left: 9px; top: 376px; width: 987px; height: 184px; padding: 4px 4px 0 5px; display: flex; overflow: hidden; box-shadow: none; border-bottom-color: #605e5c; }
table { border-collapse: separate; border-spacing: 0; table-layout: fixed; width: 959px; flex: none; align-self: flex-start; }
.k1 { width: 68px; } .k2 { width: 226px; } .k3 { width: 232px; } .k4 { width: 169px; }
.k5 { width: 68px; } .k6 { width: 90px; } .k7 { width: 106px; }
th { background: #252423; color: #fff; height: 29px; border-bottom: 1px solid #2a6a9c; border-right: 1px solid #7a7876; text-align: left; vertical-align: top; padding: 3px 0 0 4px; font-size: 12px; letter-spacing: -0.1px; font-weight: 700; white-space: nowrap; }
th:first-child, td:first-child { padding-left: 3px; }
th:nth-child(1), th:nth-child(6), th:nth-child(7) { letter-spacing: -0.3px; }
th:nth-child(5) { letter-spacing: -0.15px; }
th:nth-child(4), th:nth-child(5), th:nth-child(6) { padding-left: 3px; }
th:nth-child(n+5) { border-right-color: #252423; }
td { height: 21px; line-height: 20px; padding: 0 4px; font-size: 11px; letter-spacing: -0.17px; white-space: nowrap; border-right: 1px solid #f6f6f6; }
td:nth-child(n+5) { border-right-color: transparent; }
td:nth-child(2), td:nth-child(3) { letter-spacing: -0.13px; }
tr:nth-child(even) td { background: #ececec; }
td:nth-child(4), td:nth-child(5), td:nth-child(6) { text-align: right; padding-right: 3px; }
.scroll { width: 6px; height: 169px; margin-left: 11px; background: #f1f1f1; display: flex; flex-direction: column; align-items: center; padding: 8px 0 8px; }
.scroll i { width: 6px; height: 9px; margin: 8px 0 auto; background: #c8c8c8; }
.scroll svg { stroke: #605e5c; }
.page-edge { position: absolute; left: 1px; right: 0; top: 560px; height: 2px; background: repeating-linear-gradient(90deg, #4a4846 0 2px, #fff 2px 4px); }

/* filters pane */
.filters { width: 200px; border-right: 1px solid #e1dfdd; }
.f-head { display: flex; align-items: center; height: 52px; padding: 0 10px 7px 12px; }
.f-head h2 { margin: 0 auto 0 9px; }
.f-head .eye { margin-right: 20px; stroke: #605e5c; }
.f-search { width: 180px; height: 30px; margin-left: 8px; border: 1px solid #a19f9d; border-radius: 2px; display: flex; align-items: center; gap: 10px; padding-left: 10px; position: relative; }
.f-search::after { content: ""; position: absolute; left: -9px; right: -13px; top: 33px; height: 1px; background: #a19f9d; }
.f-sec { display: flex; justify-content: space-between; padding: 22px 11px 8px 8px; letter-spacing: -0.23px; }
.f-sec.two { padding-top: 27px; }
.f-sec em { font-style: normal; font-weight: 300; letter-spacing: 1.700px; margin-right: -1.500px; color: #605e5c; }
.f-drop { width: 184px; height: 46px; margin-left: 8px; border: 1px solid #c8c6c4; border-radius: 2px; text-align: center; line-height: 46px; }

/* page tabs */
.pages { height: 35px; display: flex; }
.arrows { width: 40px; display: flex; gap: 17px; align-items: center; padding-left: 6px; border-right: 1px solid #a19f9d; }
.arrows path { fill: #c8c6c4; stroke: none; }
.page { width: 76px; text-align: center; line-height: 36px; font-size: 12px; letter-spacing: -0.35px; border-right: 1px solid #c8c6c4; }
.page.on { background: #fff; border-bottom: 4px solid #f2c811; }
.add { width: 39px; height: 32px; margin-top: 2px; background: #f2c811; display: flex; align-items: center; justify-content: center; }
.add path { stroke: #797775; stroke-width: 3; }

/* visualizations pane */
.viz { width: 181px; display: flex; flex-direction: column; border-left: 1px solid #e1dfdd; }
.v-head { display: flex; justify-content: space-between; height: 52px; padding: 14px 11px 0 12px; color: #3b3a39; }
.v-head h2 { letter-spacing: -0.350px; }
.v-head svg { margin-top: 2px; }
.v-grid { display: grid; grid-template-columns: repeat(6, 16px); gap: 8px 12px; padding: 0 0 4px 6px; height: 165px; border-bottom: 1px solid #e1dfdd; align-content: start; }
.v-grid svg { width: 16px; height: 16px; }
.b { fill: #83beec; stroke: #1e6fb5; stroke-width: .9; }
.g { fill: #c8c6c4; stroke: #797775; stroke-width: .9; }
.w { fill: #fff; stroke: #3b3a39; stroke-width: .9; }
.d { fill: none; stroke: #3b3a39; stroke-width: 1.100; }
.bl { fill: none; stroke: #2b88c8; }
.n123 { font: 8px "Open Sans", sans-serif; fill: #2b88c8; text-anchor: middle; }
.code { font: bold 14px "Open Sans", sans-serif; fill: #2b88c8; text-anchor: middle; }
.v-tabs { display: flex; padding: 8px 0 0 12px; height: 36px; }
.v-tabs div { width: 40px; display: flex; justify-content: center; height: 28px; }
.v-tabs .on { border-bottom: 4px solid #f2c811; border-radius: 2px; }
.v-tabs svg { stroke: #252423; }
.v-label { padding-left: 12px; line-height: 16px; margin-top: 6px; letter-spacing: -0.25px; }
.v-drop { width: 170px; height: 28px; margin: 5px 0 0 4px; background: #fff; border: 1px dashed #b8b6b4; line-height: 27px; padding-left: 10px; letter-spacing: -0.21px; }
.drill { padding-left: 13px; margin-top: 14px; color: #3b3a39; letter-spacing: -0.35px; }
.v-label.cross, .v-label.keep { padding-left: 9px; }
.v-label.cross { margin-top: 15px; }
.toggle { display: flex; align-items: center; gap: 4px; height: 16px; margin-top: 13px; padding-left: 18px; }
.toggle svg { stroke: #605e5c; stroke-width: 2; }
.full { fill: #605e5c; }
.v-label.keep { margin-top: 19px; }
.v-drop.second { height: 27px; margin-top: 13px; line-height: 25px; padding-left: 8px; white-space: nowrap; }

/* fields pane */
.fields { width: 181px; border-left: 1px solid #dddbd9; }
.d-head { display: flex; justify-content: space-between; height: 45px; padding: 9px 7px 0 8px; }
.d-head h2 { letter-spacing: -0.5px; }
.d-head svg { margin-top: 4px; }
.d-search { width: 172px; height: 27px; margin-left: 4px; border: 1px solid #797775; border-radius: 2px; background: #fff; display: flex; align-items: center; gap: 7px; padding-left: 8px; font-size: 13px; color: #605e5c; }
.tree { padding-top: 10px; color: #3b3a39; }
.tree > div { display: flex; align-items: center; height: 24px; white-space: nowrap; font-size: 12px; letter-spacing: -0.26px; }
.tree .t { padding-left: 7px; }
.dn { width: 12px; height: 7px; stroke: #605e5c; margin-right: 3px; }
.tb { width: 13px; height: 12px; margin-right: 6px; stroke: #252423; stroke-width: 1.200; }
.tree .f { padding-left: 24px; }
.f i { width: 14px; }
.f i svg { width: 8px; height: 12px; stroke: #605e5c; }
.f b { width: 12px; height: 12px; border: 1px solid #797775; border-radius: 2px; margin-right: 6px; flex: none; }
.f > svg { width: 16px; height: 16px; margin-right: 4px; }
.status { height: 6px; border-top: 1px solid #dddbd9; }
```
